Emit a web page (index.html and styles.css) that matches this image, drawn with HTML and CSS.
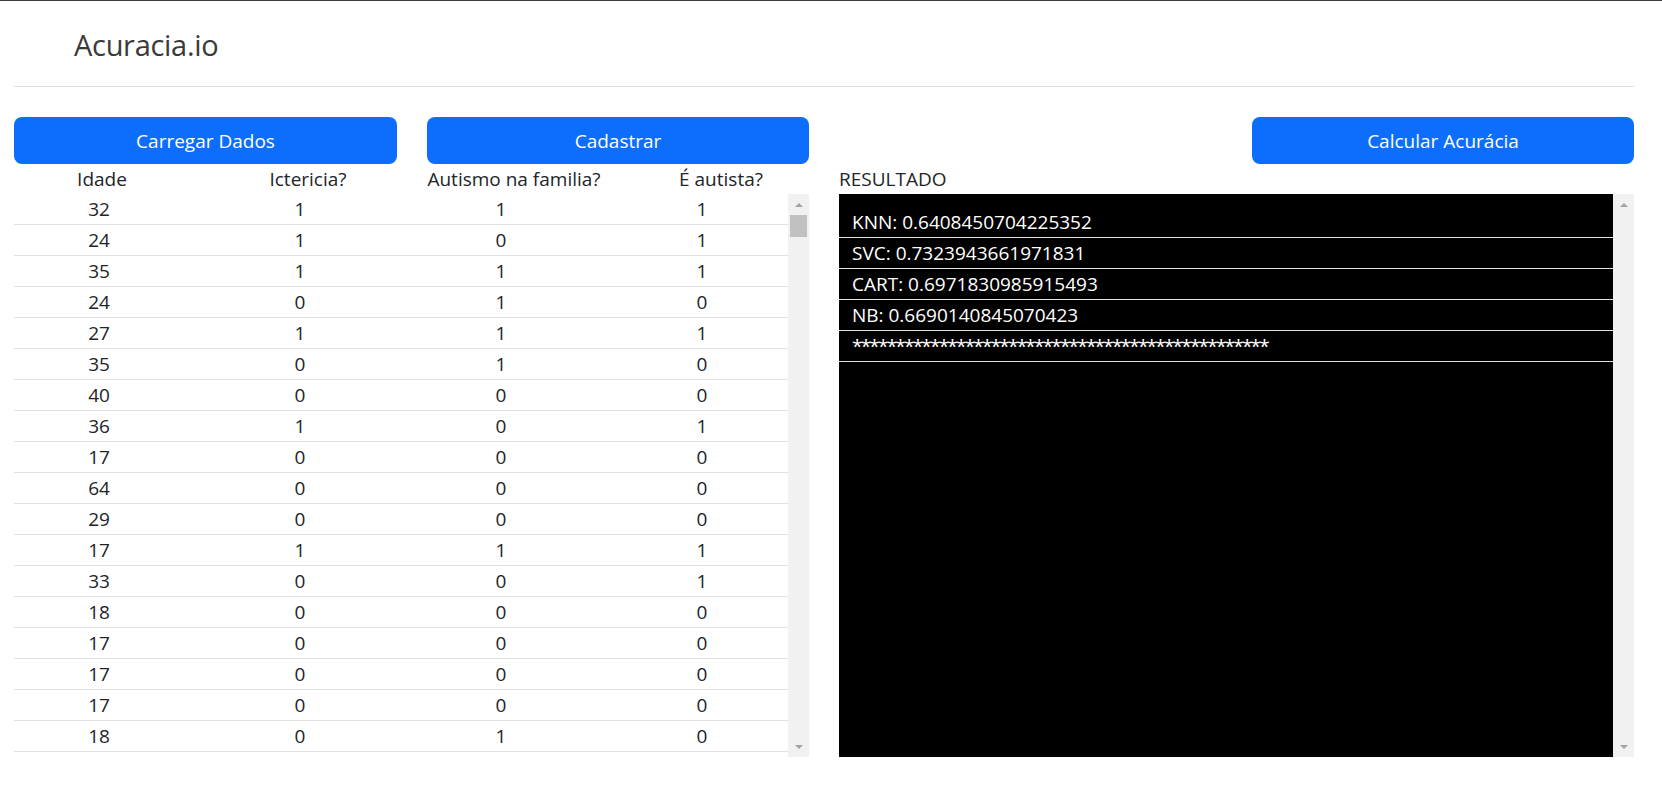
FILE: index.html
```html
<!DOCTYPE html>
<html lang="pt-BR">
<head>
<meta charset="utf-8">
<title>Acuracia.io</title>
<link rel="stylesheet" href="styles.css">
</head>
<body>
<div class="topline"></div>
<div class="page">
  <header class="brand-bar"><h1 class="brand">Acuracia.io</h1></header>
  <hr class="divider">
  <main class="main">
    <section class="left">
      <div class="btn-row btn-row-left">
        <button class="btn">Carregar Dados</button>
        <button class="btn">Cadastrar</button>
      </div>
      <div class="thead">
        <div class="th">Idade</div>
        <div class="th">Ictericia?</div>
        <div class="th">Autismo na familia?</div>
        <div class="th th-last">É autista?</div>
      </div>
      <div class="tbody">
        <div class="rows">
          <div class="row"><span>32</span><span>1</span><span>1</span><span class="c4">1</span></div>
          <div class="row"><span>24</span><span>1</span><span>0</span><span class="c4">1</span></div>
          <div class="row"><span>35</span><span>1</span><span>1</span><span class="c4">1</span></div>
          <div class="row"><span>24</span><span>0</span><span>1</span><span class="c4">0</span></div>
          <div class="row"><span>27</span><span>1</span><span>1</span><span class="c4">1</span></div>
          <div class="row"><span>35</span><span>0</span><span>1</span><span class="c4">0</span></div>
          <div class="row"><span>40</span><span>0</span><span>0</span><span class="c4">0</span></div>
          <div class="row"><span>36</span><span>1</span><span>0</span><span class="c4">1</span></div>
          <div class="row"><span>17</span><span>0</span><span>0</span><span class="c4">0</span></div>
          <div class="row"><span>64</span><span>0</span><span>0</span><span class="c4">0</span></div>
          <div class="row"><span>29</span><span>0</span><span>0</span><span class="c4">0</span></div>
          <div class="row"><span>17</span><span>1</span><span>1</span><span class="c4">1</span></div>
          <div class="row"><span>33</span><span>0</span><span>0</span><span class="c4">1</span></div>
          <div class="row"><span>18</span><span>0</span><span>0</span><span class="c4">0</span></div>
          <div class="row"><span>17</span><span>0</span><span>0</span><span class="c4">0</span></div>
          <div class="row"><span>17</span><span>0</span><span>0</span><span class="c4">0</span></div>
          <div class="row"><span>17</span><span>0</span><span>0</span><span class="c4">0</span></div>
          <div class="row"><span>18</span><span>0</span><span>1</span><span class="c4">0</span></div>
        </div>
        <div class="sb">
          <div class="sb-btn"><span class="arrow-up"></span></div>
          <div class="sb-thumb"></div>
          <div class="sb-track"></div>
          <div class="sb-btn"><span class="arrow-down"></span></div>
        </div>
      </div>
    </section>
    <section class="right">
      <div class="btn-row btn-row-right">
        <button class="btn btn-calc">Calcular Acurácia</button>
      </div>
      <div class="label">RESULTADO</div>
      <div class="result-wrap">
        <div class="result">
          <div class="res-line">KNN: 0.6408450704225352</div>
          <div class="res-line">SVC: 0.7323943661971831</div>
          <div class="res-line">CART: 0.6971830985915493</div>
          <div class="res-line">NB: 0.6690140845070423</div>
          <div class="res-line stars">************************************************</div>
        </div>
        <div class="sb">
          <div class="sb-btn"><span class="arrow-up"></span></div>
          <div class="sb-track"></div>
          <div class="sb-btn"><span class="arrow-down"></span></div>
        </div>
      </div>
    </section>
  </main>
</div>
</body>
</html>
```
FILE: styles.css
```css
html, body {
  margin: 0;
  padding: 0;
  background: #fff;
}
body {
  font-family: "Open Sans", "Noto Sans", sans-serif;
  color: #212529;
  font-size: 19px;
}
.topline {
  height: 1px;
  background: #3c3c3c;
}
.page {
  margin-left: 14px;
  width: 1620px;
}
.brand {
  margin: 0;
  padding: 26px 0 0 60px;
  font-size: 29px;
  font-weight: 400;
  line-height: 36px;
  color: #3a3a3a;
  letter-spacing: -0.3px;
}
.divider {
  margin: 23px 0 0;
  border: 0;
  height: 0;
  border-top: 1px solid #dfdfdf;
}
.main {
  display: grid;
  grid-template-columns: 795px 795px;
  column-gap: 30px;
  margin-top: 30px;
}
.btn-row-left {
  display: grid;
  grid-template-columns: 383px 382px;
  column-gap: 30px;
}
.btn-row-right {
  display: flex;
  justify-content: flex-end;
}
.btn {
  height: 47px;
  border: 0;
  border-radius: 8px;
  background: #0d6efd;
  color: #fff;
  font-family: "Open Sans", "Noto Sans", sans-serif;
  font-size: 19px;
  padding: 1px 0 0;
  margin: 0;
}
.btn-calc {
  width: 382px;
}
.thead {
  display: grid;
  grid-template-columns: 176px 236px 176px 1fr;
  height: 30px;
  line-height: 30px;
  text-align: center;
}
.th-last {
  padding-left: 31px;
}
.tbody {
  display: flex;
  height: 563px;
}
.rows {
  flex: 1;
  overflow: hidden;
}
.row {
  display: grid;
  grid-template-columns: 170px 232px 170px 1fr;
  height: 30px;
  line-height: 30px;
  border-bottom: 1px solid #dee2e6;
  text-align: center;
}
.row .c4 {
  padding-left: 30px;
}
.sb {
  width: 21px;
  background: #f1f1f1;
  display: flex;
  flex-direction: column;
}
.sb-btn {
  height: 21px;
  display: flex;
  align-items: center;
  justify-content: center;
  flex: none;
}
.sb-thumb {
  height: 22px;
  margin: 0 2px;
  background: #c1c1c1;
  flex: none;
}
.sb-track {
  flex: 1;
}
.arrow-up {
  width: 0;
  height: 0;
  border-left: 4px solid transparent;
  border-right: 4px solid transparent;
  border-bottom: 4px solid #a3a3a3;
}
.arrow-down {
  width: 0;
  height: 0;
  border-left: 4px solid transparent;
  border-right: 4px solid transparent;
  border-top: 4px solid #a3a3a3;
}
.label {
  height: 30px;
  line-height: 30px;
}
.result-wrap {
  display: flex;
  height: 563px;
}
.result {
  flex: 1;
  background: #000;
  color: #fff;
  padding-top: 13px;
  overflow: hidden;
}
.res-line {
  height: 30px;
  line-height: 30px;
  padding-left: 13px;
  border-bottom: 1px solid #dee2e6;
}
.stars {
  letter-spacing: -1.8px;
}
```
